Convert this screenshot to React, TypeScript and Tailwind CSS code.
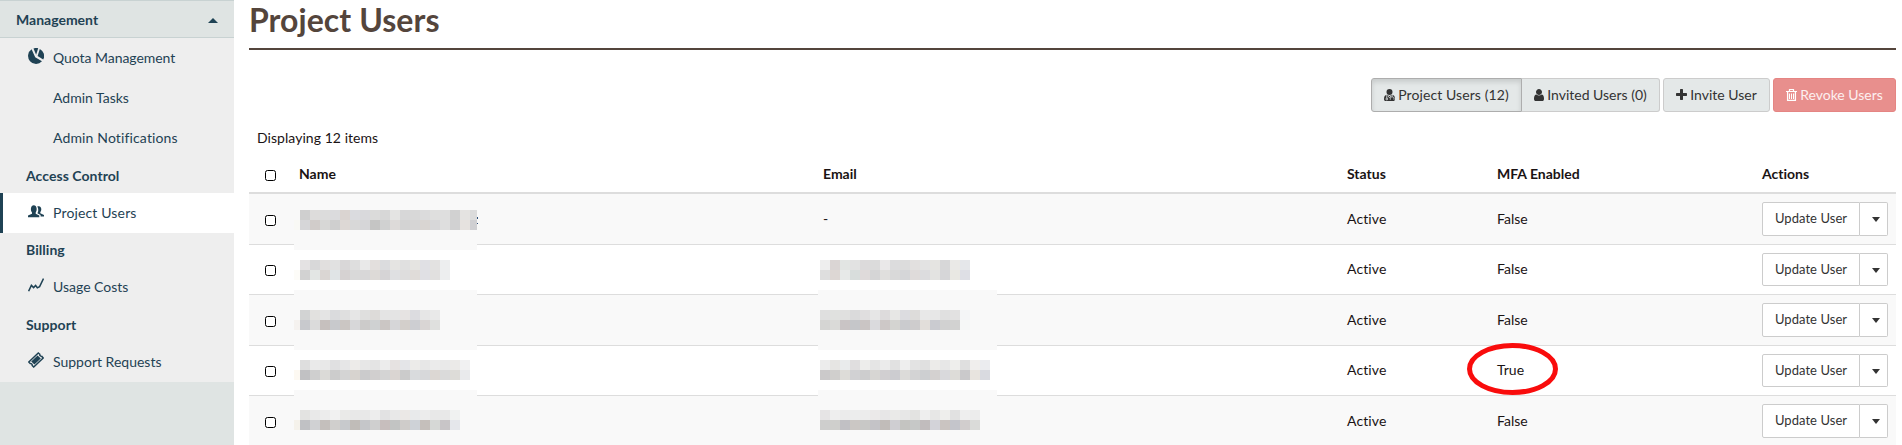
import React from "react";

type Blocks = { lead?: string; top: string; bottom: string };
type Row = {
  h: string;
  shaded: boolean;
  textPad: string;
  mosaicPad: string;
  button: string;
  mfa: string;
  name: Blocks;
  email: Blocks | null;
  patch?: string;
  emailPatch?: string;
};

const rows: Row[] = [
  {
    h: "h-[50px]", shaded: true, textPad: "pt-[15px]", mosaicPad: "pt-[16px]", button: "mt-[8px] h-[34px] pb-[2px]", mfa: "False",
    patch: "top-[46px] h-[10px]",
    name: {
      lead: "f9f9f5",
      top: "cfcfcf dddcdb dcdcdc dbdbdd dad4d1 dadbdf d9d9dc dbdbda d7d7d7 e4e4e3 d7d7d8 d8d8d8 dbdbdc dfdfde dedede d1d1d1 e4e3e1 dbdbdb",
      bottom: "d6d6d8 d1ccca d7d7d6 cfcfcf ddd8d5 d8d8d8 d6d6d8 c5c5c4 d0d1d1 dddad9 d3d3d3 d6d5d5 d9d5d2 d7d7d9 dedede d1d1d2 e6e2df cfcfd2",
    },
    email: null,
  },
  {
    h: "h-[50px]", shaded: false, textPad: "pt-[14px]", mosaicPad: "pt-[15px]", button: "mt-[8px] h-[33px] pb-px", mfa: "False",
    name: {
      lead: "fdfcf8",
      top: "e4e2e3 d8d8d9 e1dfde e1e1e1 d9d7d8 dedede e9e9e9 e3dfdd dbdcde e5e4e2 e0e0e0 e5e4e1 e0e0e4 e3e2e1 edeeef",
      bottom: "d2d2d2 e3e6e4 dad6d3 e0e4e6 d6d2d2 d9d9d9 d8d7d8 dddad7 d6d4d6 dfe0e2 dedddd e0dcd9 e0e0e4 e1e0df edeeef",
    },
    email: {
      top: "eeeeee dad5d4 e2e5e3 e2e2e2 dcdadb dbdbdb eae8e9 dcdcdd dcdcdc e2e0df e3e3e3 e5e4e1 d7d7d8 eae9e7 e5e7ea",
      bottom: "dedede ddd7d4 e7e9e8 d8dddc dfdada d5d5d6 e0dfdd d9d9d9 d5d6d8 dfdbda dcdcde e3e3e1 d6d6d8 e9e8e3 dedfe5",
    },
  },
  {
    h: "h-[51px]", shaded: true, textPad: "pt-[15px]", mosaicPad: "pt-[15px]", button: "mt-[8px] h-[34px] pb-[2px]", mfa: "False",
    patch: "top-[-5px] h-[60px]", emailPatch: "top-[-5px] h-[60px]",
    name: {
      lead: "f5f2ef",
      top: "d2d3d3 e2e1df e4e4e4 dadbdd dfdfdf e6e6e6 dfdfde dddbd9 e4e4e4 e4e4e4 e6e3e2 dcdce0 e6e6e6 e9e9e9",
      bottom: "c8c9cd dbdbdb c6c0be c8c9cc cbc6c3 d7d7d9 cccbca cfd1d2 cbc6c4 d6d6d8 d3cfcb cdced2 d9d5d4 dfe0de",
    },
    email: {
      top: "dfdfdf e0e1df e0e0df dadadb e0dedf e6e6e6 dddbdc e7e7e5 dcdce0 dddcda e8e8e8 e7e7e7 e0e0e0 e2e1e1 f4f5f7",
      bottom: "d5d5d3 dadad8 c9c4c5 c5c6c9 cac5c4 dadadd cdc8c7 d4d4d1 cacbce cecccd e2deda cacbd0 d1d1d1 d2d2d1 f6f8f7",
    },
  },
  {
    h: "h-[50px]", shaded: false, textPad: "pt-[14px]", mosaicPad: "pt-[14px]", button: "mt-[8px] h-[33px] pb-px", mfa: "True",
    name: {
      lead: "fdf9f2",
      top: "dedede eaeaea e8e8e8 e0e0e1 e6e6e7 edebe9 e7e7e7 e4e4e4 ececec e6e2e1 e4e5e8 ecebe9 e7e7e7 ebebeb e9e9e9 ebeae8 f1f1f2",
      bottom: "c1c1c3 cfcfcf dbdad7 cccccc d4d4d4 d7d3cf cbcbcc d1cfcf d4d4d4 dad5d2 cbcbcb d9dbdd d7d8da dcd7d3 dadada dddcd8 e9eaec",
    },
    email: {
      top: "ececec e6e5e3 e9ebec e0dedf ededeb e5e5e5 ebebeb e1e1e1 eeeeee e3e3e3 e0e0e0 ecebe9 e7e7e7 eeeeec dfdfdf f0eeed ebecef",
      bottom: "cbc9ca d0cfcd dddcd8 d1d1d3 cdcdce d7d6d3 d1cfd1 ccccd0 dcdbd9 d3d3d4 cdcfd1 d4d1d0 d9d9dc dddcd8 cac9cb e8e4df d9dae0",
    },
  },
  {
    h: "h-[51px]", shaded: true, textPad: "pt-[15px]", mosaicPad: "pt-[14px]", button: "mt-[8px] h-[34px] pb-[2px]", mfa: "False",
    patch: "top-[-6px] h-[56px]", emailPatch: "top-[-6px] h-[56px]",
    name: {
      lead: "f5f2eb",
      top: "e3e3e1 e9e9e9 ececec f1f1f1 eaeae8 e8e8e8 e8e8e8 ededed e2e2e3 e8e8e8 ebe8e6 e8eaeb ececec e8e8e8 e8e8e8 f0f2f1",
      bottom: "c0c1c4 d0d1d3 c4bfbc d0cfcd c7c9cc c0bcb8 c5c6c9 cfcfcf c7bebd c2c4c3 cfccca ced2d7 c5bfbb d6d8d6 c8c5c7 e5e7eb",
    },
    email: {
      top: "e6e4e5 eeeeee ebebeb eceded ececec ebe9e9 e7e6e7 eaeae8 e7e7e7 e3e3e1 eeeeee e7e7e6 eeeeec e1e1e1 eeeeee ececec",
      bottom: "cececd cfcfcc c1c0c4 cbc7c4 c8c8c6 c4c3c7 c1bcb9 cfced2 c4c4c1 c6c8c7 c1bcbd d3d3d9 cac4c1 c4c5cb d1cdcd dadbd9",
    },
  },
];

function BlockLine({ colors }: { colors: string }) {
  return (
    <div className="flex h-[10px]">
      {colors.split(" ").map((c, i) => (
        <span key={i} className="h-[10px] w-[10px] shrink-0" style={{ backgroundColor: `#${c}` }} />
      ))}
    </div>
  );
}

function Mosaic({ blocks, className }: { blocks: Blocks; className: string }) {
  return (
    <div className={`relative overflow-hidden ${className}`}>
      <BlockLine colors={blocks.top} />
      <BlockLine colors={blocks.bottom} />
    </div>
  );
}

function Box() {
  return <span className="block h-[11px] w-[11px] rounded-[2.5px] border border-black bg-white" />;
}

const PieIcon = () => (
  <svg viewBox="0 0 16 16" className="h-4 w-4" fill="currentColor">
    <path d="M3.6 1.3 7.2 9.2 14 13.3A8 8 0 1 1 3.6 1.3Z" />
    <path d="M5.5.4A8 8 0 0 1 10.2.2L8.1 6.8Z" />
    <path d="M11.8.9A7.8 7.8 0 0 1 15.2 11.6L9.6 8Z" />
  </svg>
);

const PeopleIcon = () => (
  <svg viewBox="0 0 16 13" className="h-[13px] w-4" fill="currentColor">
    <path d="M0 12.3v-1.7L4 8.8V7.6C2.2 5.4 2.6.3 5.8.3S9.4 5.4 7.7 7.6v1.2l3.6 1.8v1.7Z" />
    <path d="M9.2 1.6C13.2-.2 14.4 4.6 12.3 7.3v1L16 10v1.4h-3.4V9.9L9.4 8.2C10.6 6 10.6 3.4 9.2 1.6Z" />
  </svg>
);

const ChartIcon = () => (
  <svg viewBox="0 0 16 14" className="h-[14px] w-4" fill="none" stroke="currentColor" strokeWidth="1.5">
    <path d="M.6 13.3 3.4 7.4 5.6 9.6 7.6 7.4 9.3 9.8 11.6 8.6 15.5.6" />
  </svg>
);

const TicketIcon = () => (
  <svg viewBox="0 0 16 16" className="h-4 w-4" fill="none" stroke="currentColor" strokeWidth="1.5">
    <path d="M10.3 1 11.8 2.3a1.8 1.8 0 0 0 2 2.1L15.2 6 5.7 15 4.2 13.5a1.8 1.8 0 0 0-2-2L.8 10Z" />
    <path d="m9.6 3.4 3.2 3.1-6.4 6.1-3.2-3.1Z" fill="currentColor" stroke="none" />
  </svg>
);

const UserIcon = () => (
  <svg viewBox="0 0 1280 1792" className="h-[14px] w-[10px]" fill="currentColor">
    <path d="M1280 1399q0 109-62.5 187t-150.5 78h-854q-88 0-150.5-78t-62.5-187q0-85 8.5-160.5t31.5-152 58.5-131 94-89 134.5-34.5q131 128 313 128t313-128q76 0 134.5 34.5t94 89 58.5 131 31.5 152 8.5 160.5zm-256-887q0 159-112.5 271.5t-271.5 112.5-271.5-112.5-112.5-271.5 112.5-271.5 271.5-112.5 271.5 112.5 112.5 271.5z" />
  </svg>
);

const DoctorIcon = () => (
  <svg viewBox="0 0 11 14" className="h-[14px] w-[11px]" fill="currentColor">
    <path d="M5.5 1a3 3 0 1 1 0 6 3 3 0 0 1 0-6ZM3 6.8Q5.5 9 8 6.8c2.2.2 3 1.8 3 4.4 0 1.2-.7 1.8-1.7 1.8H1.7C.7 13 0 12.4 0 11.2c0-2.6.8-4.2 3-4.4Z" />
    <g fill="none" stroke="#e4e8e8" strokeWidth=".8">
      <path d="M2.8 7v3.2M8.2 7v1.6M6.3 11.7v-1.2c0-2.2 3.7-2.2 3.7 0v1.2" />
      <circle cx="2.8" cy="11" r=".9" />
      <path d="m3.8 7.8 1.7 2 1.7-2" />
    </g>
  </svg>
);

const PlusIcon = () => (
  <svg viewBox="0 0 1408 1792" className="h-[14px] w-[11px]" fill="currentColor">
    <path d="M1408 736v192q0 40-28 68t-68 28h-416v416q0 40-28 68t-68 28h-192q-40 0-68-28t-28-68v-416h-416q-40 0-68-28t-28-68v-192q0-40 28-68t68-28h416v-416q0-40 28-68t68-28h192q40 0 68 28t28 68v416h416q40 0 68 28t28 68z" />
  </svg>
);

const TrashIcon = () => (
  <svg viewBox="0 0 11 14" className="h-[14px] w-[11px]" fill="none" stroke="#ffffff">
    <path d="M0 3.5h11M3.5 3V1.5h4V3" strokeWidth="1.2" />
    <path d="M1.6 4v8.4h7.800V4" strokeWidth="1.3" />
    <path d="M3.500 5.500v5.500M5.500 5.500v5.500M7.500 5.500v5.500" strokeWidth="1" />
  </svg>
);

function Item({ icon, label, active, tracking = "" }: { icon?: React.ReactNode; label: string; active?: boolean; tracking?: string }) {
  return (
    <div className={`flex h-10 items-center ${active ? "border-l-[3px] border-[#1f4254] bg-white pl-[25px]" : "pl-7"}`}>
      <span className="mb-1 w-[25px]">{icon}</span>
      <span className={tracking}>{label}</span>
    </div>
  );
}

function Heading({ label, h }: { label: string; h: string }) {
  return <div className={`flex items-center pl-[26px] font-bold tracking-[0.05px] ${h}`}>{label}</div>;
}

function UserRow({ row, first }: { row: Row; first: boolean }) {
  const circled = row.mfa === "True";
  const surface = row.shaded ? "z-10 bg-[#f9f9f9]" : "";
  return (
    <div className={`relative grid shrink-0 grid-cols-[50px_524px_524px_150px_265px_1fr] ${row.h} ${surface} ${first ? "" : "border-t border-[#dddddd]"}`}>
      <div className={`pl-4 ${row.textPad}`}>
        <div className="pt-[6px]"><Box /></div>
      </div>
      <div className={`relative ${row.mosaicPad}`}>
        {row.patch && <span className={`absolute left-[-5px] w-[183px] bg-[#f9f9f9] ${row.patch}`} />}
        <div className="relative -ml-[5px] flex items-end">
          <span className="h-[10px] w-[6px]" style={{ backgroundColor: `#${row.name.lead}` }} />
          <Mosaic blocks={row.name} className={first ? "w-[177px]" : "w-[180px]"} />
          {first && (
            <span className="flex h-[13px] w-px flex-col justify-between pb-[6px]">
              <span className="h-[2px] w-px bg-[#2f4f78]" />
              <span className="h-px w-px bg-[#2f4f78]" />
            </span>
          )}
        </div>
      </div>
      {row.email ? (
        <div className={`relative ${row.mosaicPad}`}>
          {row.emailPatch && <span className={`absolute left-[-5px] w-[179px] bg-[#f9f9f9] ${row.emailPatch}`} />}
          <Mosaic blocks={row.email} className="-ml-[3px] w-[180px]" />
        </div>
      ) : (
        <div className={row.textPad}>-</div>
      )}
      <div className={`tracking-[0.1px] ${row.textPad}`}>Active</div>
      <div className={`relative ${circled ? "z-20" : ""} ${row.textPad}`}>
        {row.mfa}
        {circled && (
          <svg className="absolute left-[-30px] top-[-3px] h-[52px] w-[91px]" viewBox="0 0 91 52">
            <ellipse cx="45.5" cy="26" rx="43" ry="23.5" fill="none" stroke="#f90c0c" strokeWidth="5" />
          </svg>
        )}
      </div>
      <div className="flex items-start text-[13px] text-[#333333]">
        <button className={`flex w-[98px] items-center justify-center rounded-l-[2px] border border-[#cccccc] bg-white tracking-[0.05px] ${row.button}`}>Update User</button>
        <button className={`flex w-[28px] items-center justify-center rounded-r-[2px] border border-l-0 border-[#cccccc] bg-white pl-1 ${row.button}`}>
          <span className="mt-[2px] h-0 w-0 border-x-[4.5px] border-t-[5px] border-x-transparent border-t-[#333333]" />
        </button>
      </div>
    </div>
  );
}

export default function App() {
  return (
    <div className="flex h-[445px] w-[1902px] overflow-hidden bg-white font-['Lato',sans-serif] text-[14px] leading-5 text-[#1a1314] [font-variant-ligatures:none]">
      <aside className="w-[234px] shrink-0 bg-[#dfe4e3] text-[#1f4254]">
        <div className="flex h-[38px] items-center justify-between border-y border-[#c8d2d2] pl-4 pr-4 pt-[2px] font-bold">
          Management
          <span className="h-0 w-0 border-x-[5px] border-b-[5px] border-x-transparent border-b-[#1f4254]" />
        </div>
        <nav className="h-[344px] bg-[#eeeeee]">
          <Item icon={<PieIcon />} label="Quota Management" tracking="tracking-[-0.05px]" />
          <Item label="Admin Tasks" />
          <Item label="Admin Notifications" tracking="tracking-[0.14px]" />
          <Heading label="Access Control" h="h-[35px]" />
          <Item icon={<PeopleIcon />} label="Project Users" tracking="tracking-[0.15px]" active />
          <Heading label="Billing" h="h-[34px]" />
          <Item icon={<ChartIcon />} label="Usage Costs" />
          <Heading label="Support" h="h-[35px]" />
          <Item icon={<TicketIcon />} label="Support Requests" />
        </nav>
      </aside>
      <main className="ml-[15px] flex w-[1647px] flex-col">
        <h1 className="h-[50px] shrink-0 border-b-2 border-[#54453c] text-[32px] font-bold leading-[40px] tracking-[0.05px] text-[#54453c]">Project Users</h1>
        <div className="mt-[28px] flex h-[34px] shrink-0 justify-end text-[#333333]">
          <button className="flex w-[151px] items-center justify-center gap-[3px] rounded-l-[3px] border border-[#adadad] bg-[#e4e8e8] tracking-[0.1px] shadow-[inset_0_3px_5px_rgba(0,0,0,0.125)]"><DoctorIcon />Project Users (12)</button>
          <button className="flex w-[138px] items-center justify-center gap-[3px] rounded-r-[3px] border border-l-0 border-[#cccccc] bg-[#e4e8e8]"><UserIcon />Invited Users (0)</button>
          <button className="ml-[3px] flex w-[107px] items-center justify-center gap-[3px] rounded-[3px] border border-[#cccccc] bg-[#e4e8e8]"><PlusIcon />Invite User</button>
          <button className="ml-[3px] flex w-[123px] items-center justify-center gap-[3px] rounded-[3px] border border-[#e58583] bg-[#e88f8d] text-[#fcf0f0]"><TrashIcon />Revoke Users</button>
        </div>
        <div className="h-[44px] shrink-0 pl-2 pt-4 tracking-[0.05px]">Displaying 12 items</div>
        <div className="grid h-[38px] shrink-0 grid-cols-[50px_524px_524px_150px_265px_1fr] border-b-2 border-[#dddddd] pt-[8px] font-bold">
          <span className="pl-4 pt-[6px]"><Box /></span>
          <span>Name</span>
          <span>Email</span>
          <span>Status</span>
          <span>MFA Enabled</span>
          <span>Actions</span>
        </div>
        <div className="relative flex flex-col">
          {rows.map((row, i) => (
            <UserRow key={i} row={row} first={i === 0} />
          ))}
        </div>
      </main>
    </div>
  );
}
